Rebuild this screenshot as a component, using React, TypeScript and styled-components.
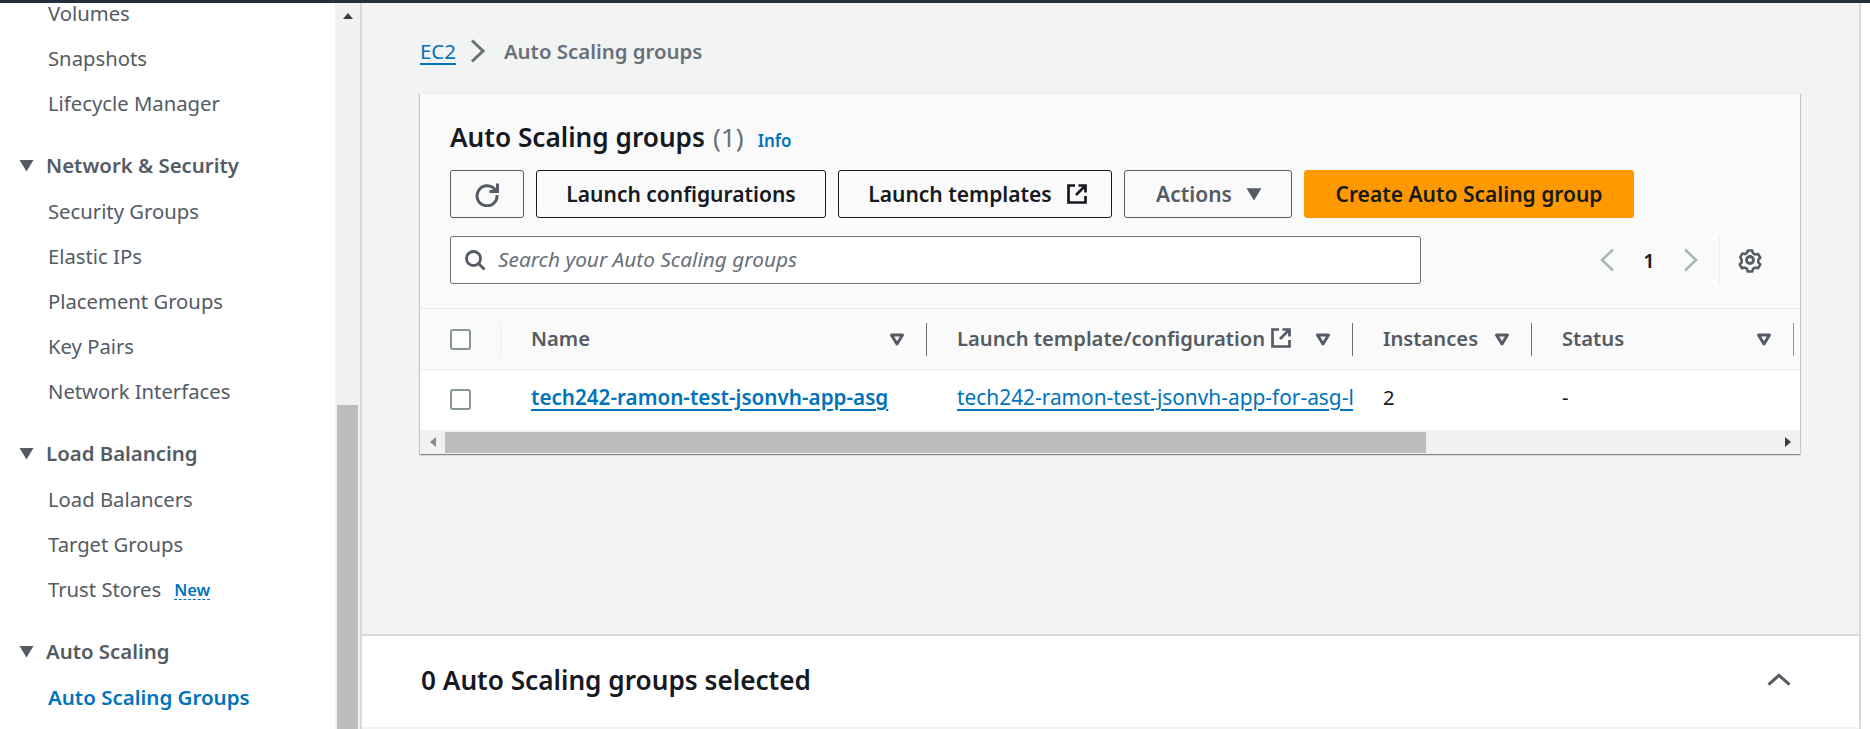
import React from 'react';
import styled, { createGlobalStyle } from 'styled-components';

const GlobalStyle = createGlobalStyle`
  html, body {
    margin: 0;
    padding: 0;
    height: 729px;
    overflow: hidden;
    background: #ffffff;
    font-family: "Noto Sans", "Open Sans", sans-serif;
    color: #16191f;
  }
  * { box-sizing: border-box; }
`;

const TopBar = styled.div`
  height: 3px;
  background: #232f3e;
`;

const Shell = styled.div`
  display: flex;
  height: 726px;
`;

/* Side navigation */
const Sidebar = styled.nav`
  width: 335px;
  flex: none;
  overflow: hidden;
`;

const NavList = styled.div`
  margin-top: -13px;
  padding-left: 48px;
`;

const NavItem = styled.a<{ $active?: boolean }>`
  display: flex;
  align-items: center;
  height: 45px;
  font-size: ${p => (p.$active ? '20.5px' : '20.25px')};
  color: ${p => (p.$active ? '#0073bb' : '#545b64')};
  font-weight: ${p => (p.$active ? 600 : 400)};
`;

const NavSection = styled.div`
  display: flex;
  align-items: center;
  height: 46px;
  margin: 17px 0 0 -29px;
  gap: 12px;
  font-size: 20.4px;
  font-weight: 600;
  color: #545b64;
`;

const NewBadge = styled.span`
  margin-left: 13px;
  margin-top: 2px;
  font-size: 16.5px;
  font-weight: 600;
  color: #0073bb;
  border-bottom: 1px dashed #0073bb;
  line-height: 19px;
`;

const SideScroll = styled.div`
  width: 25px;
  flex: none;
  display: flex;
  flex-direction: column;
  align-items: center;
  padding: 8px 2px 0;
  background: #f1f1f1;
`;

const SideThumb = styled.div`
  width: 21px;
  margin-top: auto;
  height: 324px;
  background: #bdbdbd;
`;

/* Main area */
const Main = styled.main`
  flex: 1;
  display: flex;
  flex-direction: column;
  background: #f2f3f3;
  border-left: 2px solid #d5dbdb;
  border-right: 2px solid #d5dbdb;
  margin-right: 9px;
`;

const Content = styled.div`
  flex: 1;
  padding: 0 59px 0 58px;
`;

const Breadcrumbs = styled.div`
  display: flex;
  align-items: center;
  height: 90px;
  padding-top: 6px;
  font-size: 20.4px;
`;

const CrumbLink = styled.a`
  color: #0073bb;
  text-decoration: underline;
  text-decoration-thickness: 2px;
  text-underline-offset: 4px;
`;

const CrumbCurrent = styled.span`
  color: #687078;
  font-weight: 600;
`;

const Card = styled.section`
  background: #fafafa;
  box-shadow: 0 1px 1px 0 rgba(0, 28, 36, 0.3), 1px 1px 1px 0 rgba(0, 28, 36, 0.15),
    -1px 1px 1px 0 rgba(0, 28, 36, 0.15);
  border-top: 1px solid #eaeded;
`;

const CardHead = styled.div`
  padding: 26px 0 24px 30px;
`;

const TitleRow = styled.div`
  display: flex;
  align-items: baseline;
  height: 36px;
  line-height: 34px;
`;

const Title = styled.h1`
  margin: 0;
  font-size: 26.2px;
  font-weight: 600;
`;

const Count = styled.span`
  margin-left: 8px;
  font-size: 26.2px;
  color: #687078;
`;

const InfoLink = styled.a`
  margin-left: 14px;
  font-size: 17px;
  font-weight: 600;
  color: #0073bb;
`;

const Toolbar = styled.div`
  display: flex;
  gap: 12px;
  margin-top: 14px;
`;

const Button = styled.button<{ $width: number; $indent?: number; $variant?: 'normal' | 'dark' | 'muted' | 'primary' }>`
  display: flex;
  align-items: center;
  justify-content: center;
  gap: 14px;
  width: ${p => p.$width}px;
  height: 48px;
  padding: 0 0 1px ${p => p.$indent ?? 0}px;
  border-radius: 3px;
  font-family: inherit;
  font-size: 21px;
  font-weight: 600;
  color: ${p => (p.$variant === 'muted' ? '#545b64' : '#16191f')};
  background: ${p => (p.$variant === 'primary' ? '#ff9900' : 'transparent')};
  border: 1px solid
    ${p => (p.$variant === 'primary' ? '#ff9900' : p.$variant === 'dark' ? '#16191f' : '#545b64')};
`;

const SearchRow = styled.div`
  display: flex;
  align-items: center;
  margin-top: 18px;
`;

const SearchBox = styled.div`
  display: flex;
  align-items: center;
  gap: 12px;
  width: 971px;
  height: 48px;
  padding-left: 13px;
  background: #ffffff;
  border: 1px solid #687078;
  border-radius: 3px;
`;

const Placeholder = styled.span`
  padding-bottom: 2px;
  font-size: 20.8px;
  font-style: italic;
  color: #687078;
`;

const Pager = styled.div`
  display: flex;
  align-items: center;
  margin-left: 175px;
  height: 48px;
`;

const PageNumber = styled.span`
  width: 58px;
  text-align: center;
  font-size: 20px;
  font-weight: 600;
`;

const PagerDivider = styled.div`
  width: 1px;
  height: 46px;
  margin: 0 17px 0 17px;
  background: #eaeded;
`;

const Table = styled.div`
  border-top: 1px solid #eaeded;
`;

const GridRow = styled.div<{ $head?: boolean }>`
  display: grid;
  grid-template-columns: 81px 426px 426px 179px 262px 1fr;
  align-items: center;
  height: ${p => (p.$head ? 61 : 60)}px;
  background: ${p => (p.$head ? '#fafafa' : '#ffffff')};
  border-bottom: ${p => (p.$head ? '1px solid #eaeded' : 'none')};
`;

const CheckCell = styled.div<{ $head?: boolean }>`
  display: flex;
  align-items: center;
  height: 33px;
  padding-left: 30px;
  padding-bottom: ${p => (p.$head ? 0 : 2)}px;
  border-right: ${p => (p.$head ? '1px solid #eaeded' : 'none')};
`;

const CheckBox = styled.span`
  display: block;
  width: 21px;
  height: 21px;
  background: #ffffff;
  border: 2px solid #879596;
  border-radius: 3px;
`;

const HeadCell = styled.div<{ $last?: boolean }>`
  display: flex;
  align-items: center;
  height: 33px;
  padding: 0 21px 0 30px;
  font-size: 20.2px;
  font-weight: 600;
  color: #545b64;
  border-right: 1px solid ${p => (p.$last ? '#879596' : '#687078')};
`;

const HeadLabel = styled.span`
  flex: 1;
  display: flex;
  align-items: center;
  gap: 5px;
  margin-top: -3px;
`;

const BodyCell = styled.div`
  padding-left: 30px;
  padding-bottom: 6px;
  font-size: 20.3px;
  white-space: nowrap;
  overflow: hidden;
`;

const NameLink = styled.a<{ $bold?: boolean }>`
  color: #0073bb;
  font-size: ${p => (p.$bold ? '20.65px' : '20.87px')};
  font-weight: ${p => (p.$bold ? 600 : 400)};
  text-decoration: underline;
  text-decoration-thickness: 2px;
  text-underline-offset: 4px;
`;

const HScroll = styled.div`
  display: flex;
  align-items: center;
  height: 24px;
  padding: 0 7px 0 8px;
  background: #f1f1f1;
`;

const HThumb = styled.div`
  width: 981px;
  height: 21px;
  margin-left: 7px;
  margin-right: auto;
  background: #bdbdbd;
`;

/* Bottom split panel */
const SplitPanel = styled.section`
  display: flex;
  align-items: center;
  justify-content: space-between;
  height: 93px;
  margin-bottom: 2px;
  padding: 0 66px 3px 59px;
  background: #ffffff;
  border-top: 2px solid #d5dbdb;
`;

const SplitTitle = styled.h2`
  margin: 0;
  font-size: 26.2px;
  font-weight: 600;
`;

const ArrowIcon = ({ dir, color = '#545b64' }: { dir: 'up' | 'left' | 'right'; color?: string }) => {
  const points = {
    up: '0,8 5,2 10,8',
    left: '8,0 2,5 8,10',
    right: '2,0 8,5 2,10',
  }[dir];
  return (
    <svg width="10" height="10" viewBox="0 0 10 10">
      <polygon points={points} fill={color} />
    </svg>
  );
};

const CaretDown = ({ size = 15 }: { size?: number }) => (
  <svg width={size} height={size} viewBox="0 0 15 15">
    <polygon points="0.5,2 14.5,2 7.5,13.500" fill="#545b64" />
  </svg>
);

const SortIcon = () => (
  <svg width="16" height="15" viewBox="0 0 16 15" style={{ flex: 'none' }}>
    <polygon points="2.500,3 13.500,3 8,12" fill="none" stroke="#545b64" strokeWidth="3" strokeLinejoin="round" />
  </svg>
);

const ExternalIcon = ({ color = '#16191f' }: { color?: string }) => (
  <svg width="22" height="22" viewBox="0 0 22 22" fill="none" stroke={color} strokeWidth="2.7">
    <path d="M9 2.500H2.500v17h17V13" />
    <path d="M12.500 2.500h7v7M19.500 2.500L10 12" />
  </svg>
);

const RefreshIcon = () => (
  <svg width="26" height="26" viewBox="0 0 26 26" fill="none" stroke="#545b64" strokeWidth="3">
    <path d="M21.500 9.500A10 10 0 1 0 23 14" />
    <path d="M23.500 2.500v8h-8" />
  </svg>
);

const SearchIcon = () => (
  <svg width="22" height="22" viewBox="0 0 22 22" fill="none" stroke="#545b64" strokeWidth="2.8">
    <circle cx="9.500" cy="9.500" r="7" />
    <path d="M14.500 14.500L20.500 20.500" />
  </svg>
);

const ChevronIcon = ({ dir, color, size = 24 }: { dir: 'left' | 'right' | 'up'; color: string; size?: number }) => {
  const d = { left: 'M17 1.500L6 12l11 10.500', right: 'M7 1.500L18 12 7 22.500', up: 'M3 16l9-8 9 8' }[dir];
  return (
    <svg width={size} height={size} viewBox="0 0 24 24" fill="none" stroke={color} strokeWidth="2.6">
      <path d={d} />
    </svg>
  );
};

const GearIcon = () => (
  <svg width="26" height="26" viewBox="0 0 26 26" fill="none" stroke="#545b64" strokeWidth="2.8" strokeLinejoin="round">
    <path d="M10.500 2.500h5l.8 3 2.600 1.500 3-.8 2.500 4.300-2.200 2.200v3l2.200 2.200-2.500 4.300-3-.8-2.600 1.500-.8 3h-5l-.8-3-2.600-1.500-3 .8-2.500-4.300 2.200-2.200v-3L2.100 10l2.500-4.300 3 .8 2.100-1.500z" transform="translate(1.300 1.300) scale(.9)" />
    <circle cx="13" cy="13" r="3.500" />
  </svg>
);

const Chevron = () => (
  <svg width="18" height="26" viewBox="0 0 18 26" fill="none" stroke="#687078" strokeWidth="3" style={{ margin: '0 17px 0 13px' }}>
    <path d="M3 2.500l11 10.500-11 10.500" />
  </svg>
);

export default function App() {
  return (
    <>
      <GlobalStyle />
      <TopBar />
      <Shell>
        <Sidebar>
          <NavList>
            <NavItem>Volumes</NavItem>
            <NavItem>Snapshots</NavItem>
            <NavItem>Lifecycle Manager</NavItem>
            <NavSection><CaretDown />Network &amp; Security</NavSection>
            <NavItem>Security Groups</NavItem>
            <NavItem>Elastic IPs</NavItem>
            <NavItem>Placement Groups</NavItem>
            <NavItem>Key Pairs</NavItem>
            <NavItem>Network Interfaces</NavItem>
            <NavSection><CaretDown />Load Balancing</NavSection>
            <NavItem>Load Balancers</NavItem>
            <NavItem>Target Groups</NavItem>
            <NavItem>Trust Stores<NewBadge>New</NewBadge></NavItem>
            <NavSection><CaretDown />Auto Scaling</NavSection>
            <NavItem $active>Auto Scaling Groups</NavItem>
          </NavList>
        </Sidebar>
        <SideScroll>
          <ArrowIcon dir="up" color="#3d3d3d" />
          <SideThumb />
        </SideScroll>
        <Main>
          <Content>
            <Breadcrumbs>
              <CrumbLink>EC2</CrumbLink>
              <Chevron />
              <CrumbCurrent>Auto Scaling groups</CrumbCurrent>
            </Breadcrumbs>
            <Card>
              <CardHead>
                <TitleRow>
                  <Title>Auto Scaling groups</Title>
                  <Count>(1)</Count>
                  <InfoLink>Info</InfoLink>
                </TitleRow>
                <Toolbar>
                  <Button $width={74}><RefreshIcon /></Button>
                  <Button $width={290} $variant="dark">Launch configurations</Button>
                  <Button $width={274} $indent={6} $variant="dark">Launch templates<ExternalIcon /></Button>
                  <Button $width={168} $indent={2} $variant="muted">Actions<CaretDown size={16} /></Button>
                  <Button $width={330} $variant="primary">Create Auto Scaling group</Button>
                </Toolbar>
                <SearchRow>
                  <SearchBox>
                    <SearchIcon />
                    <Placeholder>Search your Auto Scaling groups</Placeholder>
                  </SearchBox>
                  <Pager>
                    <ChevronIcon dir="left" color="#aab7b8" />
                    <PageNumber>1</PageNumber>
                    <ChevronIcon dir="right" color="#aab7b8" />
                    <PagerDivider />
                    <GearIcon />
                  </Pager>
                </SearchRow>
              </CardHead>
              <Table>
                <GridRow $head>
                  <CheckCell $head><CheckBox /></CheckCell>
                  <HeadCell><HeadLabel>Name</HeadLabel><SortIcon /></HeadCell>
                  <HeadCell><HeadLabel>Launch template/configuration<ExternalIcon color="#545b64" /></HeadLabel><SortIcon /></HeadCell>
                  <HeadCell><HeadLabel>Instances</HeadLabel><SortIcon /></HeadCell>
                  <HeadCell $last><HeadLabel>Status</HeadLabel><SortIcon /></HeadCell>
                </GridRow>
                <GridRow>
                  <CheckCell><CheckBox /></CheckCell>
                  <BodyCell><NameLink $bold>tech242-ramon-test-jsonvh-app-asg</NameLink></BodyCell>
                  <BodyCell><NameLink>tech242-ramon-test-jsonvh-app-for-asg-l</NameLink></BodyCell>
                  <BodyCell>2</BodyCell>
                  <BodyCell>-</BodyCell>
                </GridRow>
                <HScroll>
                  <ArrowIcon dir="left" color="#8a8a8a" />
                  <HThumb />
                  <ArrowIcon dir="right" color="#3d3d3d" />
                </HScroll>
              </Table>
            </Card>
          </Content>
          <SplitPanel>
            <SplitTitle>0 Auto Scaling groups selected</SplitTitle>
            <ChevronIcon dir="up" color="#545b64" size={28} />
          </SplitPanel>
        </Main>
      </Shell>
    </>
  );
}
